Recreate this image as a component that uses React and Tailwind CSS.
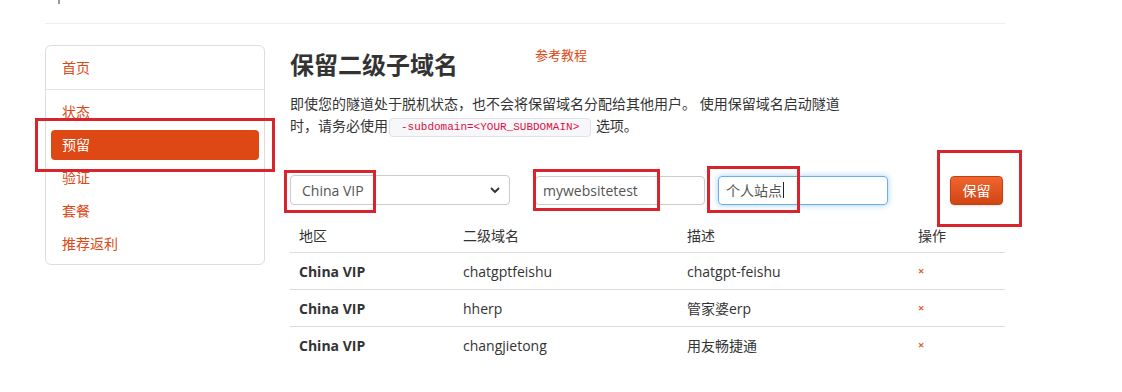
import React from "react";

const navItems = ["状态", "预留", "验证", "套餐", "推荐返利"];

const rows = [
  { region: "China VIP", sub: "chatgptfeishu", desc: "chatgpt-feishu" },
  { region: "China VIP", sub: "hherp", desc: "管家婆erp" },
  { region: "China VIP", sub: "changjietong", desc: "用友畅捷通" },
];

// red annotation frames drawn over the screenshot
const marks = [
  "left-[35px] top-[118px] w-[240px] h-[54px]",
  "left-[284px] top-[170px] w-[92px] h-[43px]",
  "left-[533px] top-[169px] w-[127px] h-[42px]",
  "left-[707px] top-[166px] w-[93px] h-[47px]",
  "left-[937px] top-[150px] w-[85px] h-[77px]",
];

function Sidebar() {
  return (
    <div className="w-[220px] h-[220px] shrink-0 border border-[#ddd] rounded-md pt-[5px] text-[14px] text-[#dd4814]">
      <div className="h-[33px] flex items-center px-[16px]">首页</div>
      <div className="border-t border-[#e5e5e5] mt-[5px] mb-[5px]" />
      {navItems.map((item) =>
        item === "预留" ? (
          <div
            key={item}
            className="h-[30px] my-[1.5px] mx-[5px] px-[11px] flex items-center rounded-[4px] bg-[#dd4814] text-white"
          >
            {item}
          </div>
        ) : (
          <div key={item} className="h-[33px] flex items-center px-[16px]">
            {item}
          </div>
        )
      )}
    </div>
  );
}

function ReserveForm() {
  return (
    <div className="flex items-center mt-[38px] h-[30px] text-[14px] text-[#555]">
      <div className="w-[220px] h-[30px] border border-[#ccc] rounded-[4px] flex items-center justify-between pl-[11px] pr-[8px]">
        <span>China VIP</span>
        <svg width="12" height="12" viewBox="0 0 12 12" fill="none">
          <path d="M2.5 4.5 6 8l3.5-3.5" stroke="#333" strokeWidth="1.8" strokeLinecap="round" strokeLinejoin="round" />
        </svg>
      </div>
      <div className="ml-[25px] w-[170px] h-[29px] border border-[#ccc] rounded-[4px] flex items-center px-[7px]">
        mywebsitetest
      </div>
      <div className="ml-[13px] w-[170px] h-[29px] border border-[#66afe9] rounded-[4px] flex items-center px-[7px] shadow-[0_0_6px_rgba(102,175,233,0.6)]">
        个人站点
        <span className="w-px h-[16px] bg-[#222] ml-px" />
      </div>
      <button className="ml-[62px] w-[53px] h-[29px] rounded-[4px] text-white text-[14px] bg-gradient-to-b from-[#f0662f] to-[#d04512] border border-[#c4410f] shadow-sm">
        保留
      </button>
    </div>
  );
}

function ReserveTable() {
  const cols = ["w-[164px]", "w-[224px]", "w-[231px]", "w-[96px]"];
  return (
    <div className="mt-[13px] text-[14px] text-[#333]">
      <div className="flex h-[34px] items-center">
        {["地区", "二级域名", "描述", "操作"].map((h, i) => (
          <div key={h} className={`${cols[i]} px-[9px]`}>
            {h}
          </div>
        ))}
      </div>
      {rows.map((r) => (
        <div key={r.sub} className="flex h-[37px] items-center border-t border-[#ddd]">
          <div className={`${cols[0]} px-[9px] font-bold`}>{r.region}</div>
          <div className={`${cols[1]} px-[9px]`}>{r.sub}</div>
          <div className={`${cols[2]} px-[9px]`}>{r.desc}</div>
          <div className={`${cols[3]} px-[9px] text-[11px] font-bold text-[#d9622f]`}>×</div>
        </div>
      ))}
    </div>
  );
}

export default function App() {
  return (
    <div
      className="relative w-[1122px] h-[392px] overflow-hidden bg-white"
      style={{ fontFamily: '"Open Sans", "Noto Sans CJK SC", sans-serif' }}
    >
      <div className="ml-[45px] w-[960px] h-[24px] border-b border-[#eee]">
        <div className="ml-[13px] w-[2px] h-[4px] bg-[#999]" />
      </div>

      <div className="ml-[45px] w-[960px] pt-[21px] flex gap-[25px]">
        <Sidebar />
        <main className="w-[715px]">
          <div className="flex items-start">
            <h1 className="text-[24px] leading-[40px] font-bold text-[#333]">保留二级子域名</h1>
            <a className="ml-[77px] text-[13px] leading-5 text-[#dd4814]">参考教程</a>
          </div>
          <p className="mt-[8px] max-w-[560px] text-[14px] leading-[22px] text-[#333]">
            即使您的隧道处于脱机状态，也不会将保留域名分配给其他用户。 使用保留域名启动隧道时，请务必使用
            <code
              className="inline-block align-middle mx-[1px] px-[11px] h-[19px] leading-[17px] rounded-[4px] border border-[#e1e1e8] bg-[#f7f7f9] text-[#dd1144] text-[11px]"
              style={{ fontFamily: '"Liberation Mono", monospace' }}
            >
              -subdomain=&lt;YOUR_SUBDOMAIN&gt;
            </code>
            {" "}选项。
          </p>
          <ReserveForm />
          <ReserveTable />
        </main>
      </div>

      {marks.map((m) => (
        <div key={m} className={`absolute ${m} border-[3px] border-[#d9232d] pointer-events-none`} />
      ))}
    </div>
  );
}
